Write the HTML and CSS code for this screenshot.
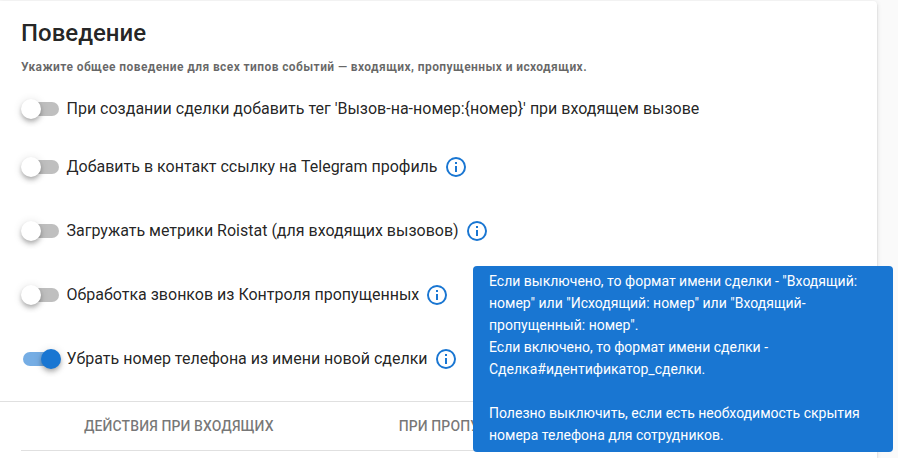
FILE: index.html
```html
<!DOCTYPE html>
<html lang="ru">
<head>
<meta charset="utf-8">
<title>Поведение</title>
<link rel="stylesheet" href="styles.css">
</head>
<body>
<main class="card">
  <section class="body">
    <h1 class="title">Поведение</h1>
    <p class="subtitle">Укажите общее поведение для всех типов событий — входящих, пропущенных и исходящих.</p>
    <div class="row row-first">
      <span class="switch"><span class="track"></span><span class="thumb"></span></span>
      <span class="label">При создании сделки добавить тег 'Вызов-на-номер:{номер}' при входящем вызове</span>
    </div>
    <div class="row row-second">
      <span class="switch"><span class="track"></span><span class="thumb"></span></span>
      <span class="label">Добавить в контакт ссылку на Telegram профиль</span>
      <svg class="info" viewBox="0 0 24 24"><path d="M11 9h2V7h-2m1 13c-4.41 0-8-3.59-8-8s3.590-8 8-8 8 3.590 8 8-3.590 8-8 8m0-18A10 10 0 0 0 2 12a10 10 0 0 0 10 10 10 10 0 0 0 10-10A10 10 0 0 0 12 2m-1 15h2v-6h-2v6z"/></svg>
    </div>
    <div class="row">
      <span class="switch"><span class="track"></span><span class="thumb"></span></span>
      <span class="label">Загружать метрики Roistat (для входящих вызовов)</span>
      <svg class="info" viewBox="0 0 24 24"><path d="M11 9h2V7h-2m1 13c-4.41 0-8-3.59-8-8s3.590-8 8-8 8 3.590 8 8-3.590 8-8 8m0-18A10 10 0 0 0 2 12a10 10 0 0 0 10 10 10 10 0 0 0 10-10A10 10 0 0 0 12 2m-1 15h2v-6h-2v6z"/></svg>
    </div>
    <div class="row">
      <span class="switch"><span class="track"></span><span class="thumb"></span></span>
      <span class="label">Обработка звонков из Контроля пропущенных</span>
      <svg class="info" viewBox="0 0 24 24"><path d="M11 9h2V7h-2m1 13c-4.41 0-8-3.59-8-8s3.590-8 8-8 8 3.590 8 8-3.590 8-8 8m0-18A10 10 0 0 0 2 12a10 10 0 0 0 10 10 10 10 0 0 0 10-10A10 10 0 0 0 12 2m-1 15h2v-6h-2v6z"/></svg>
    </div>
    <div class="row">
      <span class="switch is-on"><span class="track"></span><span class="thumb"></span></span>
      <span class="label">Убрать номер телефона из имени новой сделки</span>
      <svg class="info" viewBox="0 0 24 24"><path d="M11 9h2V7h-2m1 13c-4.41 0-8-3.59-8-8s3.590-8 8-8 8 3.590 8 8-3.590 8-8 8m0-18A10 10 0 0 0 2 12a10 10 0 0 0 10 10 10 10 0 0 0 10-10A10 10 0 0 0 12 2m-1 15h2v-6h-2v6z"/></svg>
    </div>
  </section>
  <nav class="tabs">
    <span class="tab">Действия при входящих</span>
    <span class="tab">При пропущенных</span>
  </nav>
</main>
<div class="tooltip">Если выключено, то формат имени сделки - "Входящий: номер" или "Исходящий: номер" или "Входящий-пропущенный: номер".<br>Если включено, то формат имени сделки - Сделка#идентификатор_сделки.<br><br>Полезно выключить, если есть необходимость скрытия номера телефона для сотрудников.</div>
</body>
</html>
```
FILE: styles.css
```css
html, body {
  margin: 0;
  height: 458px;
  overflow: hidden;
  background: #fafafa;
  font-family: Roboto, "Liberation Sans", sans-serif;
}
.card {
  width: 877px;
  height: 457px;
  margin-top: 1px;
  background: #fff;
  border-top-right-radius: 4px;
  box-shadow: 0 3px 1px -2px rgba(0,0,0,.2), 0 2px 2px 0 rgba(0,0,0,.14), 0 1px 5px 0 rgba(0,0,0,.12);
}
.body {
  height: 384px;
  padding: 16px 21px 0;
  border-bottom: 1px solid #e0e0e0;
}
.title {
  margin: 0;
  font-size: 24px;
  font-weight: 500;
  line-height: 32px;
  color: rgba(0,0,0,.87);
}
.subtitle {
  margin: 8px 0 0;
  font-size: 12px;
  font-weight: 700;
  line-height: 20px;
  letter-spacing: .4px;
  color: rgba(0,0,0,.6);
}
.row {
  display: flex;
  align-items: center;
  height: 24px;
  margin-top: 40px;
}
.row-first {
  margin-top: 20px;
}
.row-second {
  margin-top: 34px;
}
.switch {
  position: relative;
  flex: none;
  width: 40px;
  height: 24px;
  margin-right: 5.5px;
}
.track {
  position: absolute;
  left: 2px;
  top: 5px;
  width: 36px;
  height: 14px;
  border-radius: 7px;
  background: rgba(0,0,0,.25);
}
.thumb {
  position: absolute;
  left: 0;
  top: 2px;
  width: 20px;
  height: 20px;
  border-radius: 50%;
  background: #fff;
  box-shadow: 0 2px 4px -1px rgba(0,0,0,.2), 0 4px 5px 0 rgba(0,0,0,.14), 0 1px 10px 0 rgba(0,0,0,.12);
}
.is-on .track {
  background: rgba(25,118,210,.6);
}
.is-on .thumb {
  left: 20px;
  background: #1976d2;
}
.label {
  font-size: 16px;
  line-height: 24px;
  color: rgba(0,0,0,.87);
  white-space: nowrap;
}
.info {
  flex: none;
  width: 24px;
  height: 24px;
  margin-left: 6px;
  fill: #1976d2;
}
.tabs {
  display: flex;
  height: 48px;
  margin-left: 21px;
  border-bottom: 1px solid #e0e0e0;
}
.tab {
  padding: 0 62px 0 63px;
  font-size: 14px;
  font-weight: 500;
  line-height: 48px;
  letter-spacing: .1px;
  text-transform: uppercase;
  color: rgba(0,0,0,.54);
  white-space: nowrap;
}
.tooltip {
  position: absolute;
  left: 473px;
  top: 266px;
  width: 420px;
  box-sizing: border-box;
  padding: 4px 16px 6px;
  border-radius: 4px;
  background: #1976d2;
  color: #fff;
  font-size: 14px;
  line-height: 22px;
}
```
